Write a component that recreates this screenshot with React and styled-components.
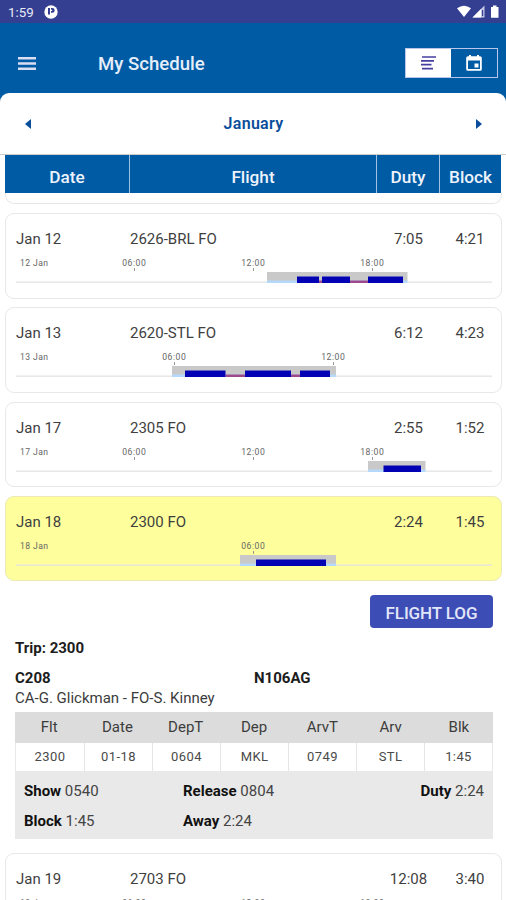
import styled, { createGlobalStyle } from "styled-components";
import { useState } from "react";

const trips = [
  {
    date: "Jan 12",
    flight: "2626-BRL FO",
    duty: "7:05",
    block: "4:21",
    day: "12 Jan",
    ticks: [[118, "06:00"], [237, "12:00"], [356, "18:00"]],
    duties: [251, 391.5],
    legs: [[281, 303], [306, 334], [352, 387]],
    sits: [[303, 306], [334, 352]],
  },
  {
    date: "Jan 13",
    flight: "2620-STL FO",
    duty: "6:12",
    block: "4:23",
    day: "13 Jan",
    ticks: [[158, "06:00"], [317, "12:00"]],
    duties: [156, 320],
    legs: [[169, 209.5], [229, 275], [284, 314]],
    sits: [[209.5, 229], [275, 284]],
  },
  {
    date: "Jan 17",
    flight: "2305 FO",
    duty: "2:55",
    block: "1:52",
    day: "17 Jan",
    ticks: [[118, "06:00"], [237, "12:00"], [356, "18:00"]],
    duties: [352, 409.5],
    legs: [[367.5, 405]],
    sits: [],
  },
  {
    date: "Jan 18",
    flight: "2300 FO",
    duty: "2:24",
    block: "1:45",
    day: "18 Jan",
    ticks: [[237, "06:00"]],
    duties: [224, 320],
    legs: [[240, 310]],
    sits: [],
  },
  {
    date: "Jan 19",
    flight: "2703 FO",
    duty: "12:08",
    block: "3:40",
    day: "19 Jan",
    ticks: [[118, "06:00"], [237, "12:00"], [356, "18:00"]],
    duties: null,
    legs: [],
    sits: [],
  },
];

const legHead = ["Flt", "Date", "DepT", "Dep", "ArvT", "Arv", "Blk"];
const legRow = ["2300", "01-18", "0604", "MKL", "0749", "STL", "1:45"];

const Timeline = ({ trip }) => (
  <Chart width="476" height="32" viewBox="0 0 476 32">
    <text x="4" y="11" textLength="28">{trip.day}</text>
    {trip.ticks.map(([x, label]) => (
      <g key={label}>
        <text x={x} y="11" textAnchor="middle" textLength="23.5">{label}</text>
        <rect x={x} y="13" width="1" height="3" fill="#999" />
      </g>
    ))}
    <rect x="0" y="26.5" width="476" height="1.3" fill="#e3e3e3" />
    {trip.duties && (
      <>
        <rect x={trip.duties[0]} y="17" width={trip.duties[1] - trip.duties[0]} height="9" fill="#c9c9c9" />
        <rect x={trip.duties[0]} y="25.5" width={trip.duties[1] - trip.duties[0]} height="2.5" fill="#b5d9fb" />
      </>
    )}
    {trip.sits.map(([from, to]) => (
      <rect key={from} x={from} y="25.5" width={to - from} height="2.5" fill="#9c4a8c" />
    ))}
    {trip.legs.map(([from, to]) => (
      <rect key={from} x={from} y="21.5" width={to - from} height="6.5" fill="#0202b4" />
    ))}
  </Chart>
);

const TripDetails = () => (
  <Details>
    <LogButton>FLIGHT LOG</LogButton>
    <TripTitle>Trip: 2300</TripTitle>
    <Aircraft>
      <b>C208</b>
      <b>N106AG</b>
    </Aircraft>
    <Crew>CA-G. Glickman - FO-S. Kinney</Crew>
    <LegTable>
      <LegHead>
        {legHead.map((item) => (
          <span key={item}>{item}</span>
        ))}
      </LegHead>
      <LegRow>
        {legRow.map((item) => (
          <span key={item}>{item}</span>
        ))}
      </LegRow>
      <Totals>
        <p><b>Show</b> 0540</p>
        <p><b>Release</b> 0804</p>
        <Right><b>Duty</b> 2:24</Right>
        <p><b>Block</b> 1:45</p>
        <p><b>Away</b> 2:24</p>
      </Totals>
    </LegTable>
  </Details>
);

const App = () => {
  const [selected, setSelected] = useState("Jan 18");
  const [view, setView] = useState("list");

  return (
    <Container>
      <GlobalStyle />
      <StatusBar>
        <span>1:59</span>
        <svg width="14" height="14" viewBox="0 0 14 14">
          <circle cx="7" cy="7" r="6.7" fill="#fff" />
          <path d="M4 3h2v6.5H4zM7 3h1.3a2.3 2.3 0 0 1 0 4.8H7V6h1.2V4.8H7z" fill="#343f91" />
        </svg>
        <StatusIcons width="43" height="14" viewBox="0 0 43 14">
          <path d="M0 3.2Q7 -1.8 14 3.2L7 12z" fill="#fff" />
          <path d="M27.5 0.5V12.5H15.5z" fill="#c3c7e8" />
          <path d="M24 4V12.5H15.5z" fill="#fff" />
          <path d="M25 5h1.2v6H25z" fill="#343f91" />
          <path d="M34 2h2V.5h3.5V2h2v10.7H34z" fill="#fff" />
        </StatusIcons>
      </StatusBar>
      <Header>
        <MenuBtn>
          <svg width="18" height="13" viewBox="0 0 18 13">
            <path d="M0 1.3h18M0 6.5h18M0 11.7h18" stroke="#d9def3" strokeWidth="2.5" />
          </svg>
        </MenuBtn>
        <h1>My Schedule</h1>
        <Toggle>
          <ToggleBtn $active={view === "list"} onClick={() => setView("list")}>
            <svg width="15" height="14" viewBox="0 0 15 14">
              <path d="M1 1h14M0 4.8h13M0 8.7h10.5M1 12.6h11" stroke={view === "list" ? "#45409f" : "#fff"} strokeWidth="1.7" />
            </svg>
          </ToggleBtn>
          <ToggleBtn $active={view === "month"} onClick={() => setView("month")}>
            <svg width="16" height="16" viewBox="0 0 16 16" fill={view === "month" ? "#005ba5" : "#fff"}>
              <path
                fillRule="evenodd"
                d="M2 1.2h1V0h2v1.2h6V0h2v1.2h1a1.8 1.8 0 0 1 1.8 1.8v11.2A1.6 1.6 0 0 1 14.2 15.8H1.8A1.6 1.6 0 0 1 .2 14.2V3A1.8 1.8 0 0 1 2 1.2zM2 5.5v8.6h12V5.5z"
              />
              <rect x="8.5" y="8.5" width="4" height="4" />
            </svg>
          </ToggleBtn>
        </Toggle>
      </Header>
      <MonthBar>
        <svg width="6" height="10" viewBox="0 0 6 10"><path d="M6 0v10L0 5z" fill="#0a4e9b" /></svg>
        <h2>January</h2>
        <svg width="6" height="10" viewBox="0 0 6 10"><path d="M0 0v10L6 5z" fill="#0a4e9b" /></svg>
      </MonthBar>
      <TableHead>
        <span>Date</span>
        <span>Flight</span>
        <span>Duty</span>
        <span>Block</span>
      </TableHead>
      <List>
        <CardTail />
        {trips.map((trip) => (
          <div key={trip.date}>
            <Card $selected={selected === trip.date} onClick={() => setSelected(trip.date)}>
              <Row>
                <span>{trip.date}</span>
                <span>{trip.flight}</span>
                <span>{trip.duty}</span>
                <span>{trip.block}</span>
              </Row>
              <Timeline trip={trip} />
            </Card>
            {selected === trip.date && <TripDetails />}
          </div>
        ))}
      </List>
    </Container>
  );
};

export default App;

const GlobalStyle = createGlobalStyle`
  * {
    box-sizing: border-box;
    margin: 0;
    padding: 0;
  }

  body {
    background-color: #fff;
    font-family: Roboto, "Liberation Sans", sans-serif;
  }

  button {
    font-family: inherit;
    cursor: pointer;
  }
`;

const Container = styled.div`
  display: flex;
  flex-direction: column;
  width: 506px;
  height: 900px;
  overflow: hidden;
  background-color: #005ba5;
`;

const StatusBar = styled.div`
  display: flex;
  align-items: center;
  flex: none;
  gap: 10px;
  height: 23px;
  padding: 1px 6px 0 8px;
  background-color: #343f91;
  color: #e8eaf8;
  font-size: 13.3px;
`;

const StatusIcons = styled.svg`
  margin-left: auto;
`;

const Header = styled.div`
  display: flex;
  align-items: center;
  flex: none;
  height: 70px;
  padding: 10px 8px 0 18px;

  h1 {
    flex: 1;
    padding-top: 2px;
    color: #e6eefa;
    font-size: 18.6px;
    font-weight: 500;
  }
`;

const MenuBtn = styled.button`
  display: flex;
  width: 80px;
  border: none;
  background-color: transparent;
`;

const Toggle = styled.div`
  display: flex;
  width: 93.5px;
  height: 30px;
  border: 1px solid #b9c6ea;
`;

const ToggleBtn = styled.button`
  display: flex;
  align-items: center;
  justify-content: center;
  flex: 1;
  border: none;
  background-color: ${(props) => (props.$active ? "#fff" : "transparent")};
`;

const MonthBar = styled.div`
  display: flex;
  align-items: center;
  justify-content: space-between;
  flex: none;
  height: 62px;
  padding: 0 24px 0 25px;
  border-bottom: 1px solid #ccc;
  border-radius: 9px 9px 0 0;
  background-color: #fff;

  h2 {
    color: #0a4e9b;
    font-size: 16px;
    font-weight: 600;
    letter-spacing: 0.3px;
  }
`;

const TableHead = styled.div`
  display: grid;
  grid-template-columns: 124px 247px 63px 62px;
  flex: none;
  height: 38px;
  border: solid #fff;
  border-width: 0 5px;
  box-sizing: content-box;
  background-color: #005ba5;
  color: #eef3fb;
  font-size: 17.2px;
  font-weight: 500;
  line-height: 44px;
  text-align: center;

  span + span {
    border-left: 1px solid #9fc0e2;
  }
`;

const List = styled.div`
  flex: 1;
  min-height: 0;
  padding: 0 4px 0 5px;
  overflow: hidden;
  background-color: #fff;
`;

const CardTail = styled.div`
  height: 11px;
  margin-bottom: 9px;
  border: 1px solid #e6e6e6;
  border-top: none;
  border-radius: 0 0 9px 9px;
`;

const Card = styled.div`
  height: 85.5px;
  margin-bottom: 8.8px;
  padding: 14px 9px 0 10px;
  border: 1px solid ${(props) => (props.$selected ? "#ece9b4" : "#e8e8e8")};
  border-radius: 9px;
  background-color: ${(props) => (props.$selected ? "#feff9c" : "#fff")};
  cursor: pointer;
`;

const Row = styled.div`
  display: grid;
  grid-template-columns: 114px 247px 63px 60px;
  color: #3f3f3f;
  font-size: 15px;
  line-height: 22px;

  span:nth-child(n + 3) {
    text-align: center;
  }
`;

const Chart = styled.svg`
  display: block;
  margin-top: 5px;

  text {
    fill: #666;
    font-size: 8.6px;
  }
`;

const Details = styled.div`
  display: flex;
  flex-direction: column;
  height: 263.3px;
  padding: 5px 9px 0 10px;
  color: #1c1c1c;
  font-size: 15px;
`;

const LogButton = styled.button`
  align-self: flex-end;
  width: 123px;
  height: 33px;
  padding-top: 2px;
  border: none;
  border-radius: 4px;
  background-color: #3c4db5;
  color: #e2e6f9;
  font-size: 17px;
  font-weight: 500;
  letter-spacing: -0.1px;
`;

const TripTitle = styled.h3`
  margin-top: 11px;
  font-size: 15px;
  line-height: 18px;
`;

const Aircraft = styled.div`
  display: grid;
  grid-template-columns: 1fr 1fr;
  margin-top: 11px;
  line-height: 20px;
`;

const Crew = styled.p`
  color: #3c3c3c;
  line-height: 20px;
`;

const LegTable = styled.div`
  height: 127px;
  margin-top: 4px;
  background-color: #e9e9e9;
`;

const LegHead = styled.div`
  display: grid;
  grid-template-columns: repeat(7, 1fr);
  background-color: #dcdcdc;
  color: #3c3c3c;
  line-height: 31px;
  text-align: center;
`;

const LegRow = styled.div`
  display: grid;
  grid-template-columns: repeat(7, 1fr);
  padding: 0 1px;
  background-color: #e9e9e9;
  color: #4a4a4a;
  font-size: 13px;
  letter-spacing: 0.4px;
  line-height: 28px;
  text-align: center;

  span {
    background-color: #fff;
  }

  span + span {
    border-left: 1px solid #e4e4e4;
  }
`;

const Totals = styled.div`
  display: grid;
  grid-template-columns: 159px 159px 1fr;
  row-gap: 10px;
  padding: 10px 9px;
  color: #444;
  line-height: 20px;

  b {
    color: #111;
  }
`;

const Right = styled.p`
  text-align: right;
`;
